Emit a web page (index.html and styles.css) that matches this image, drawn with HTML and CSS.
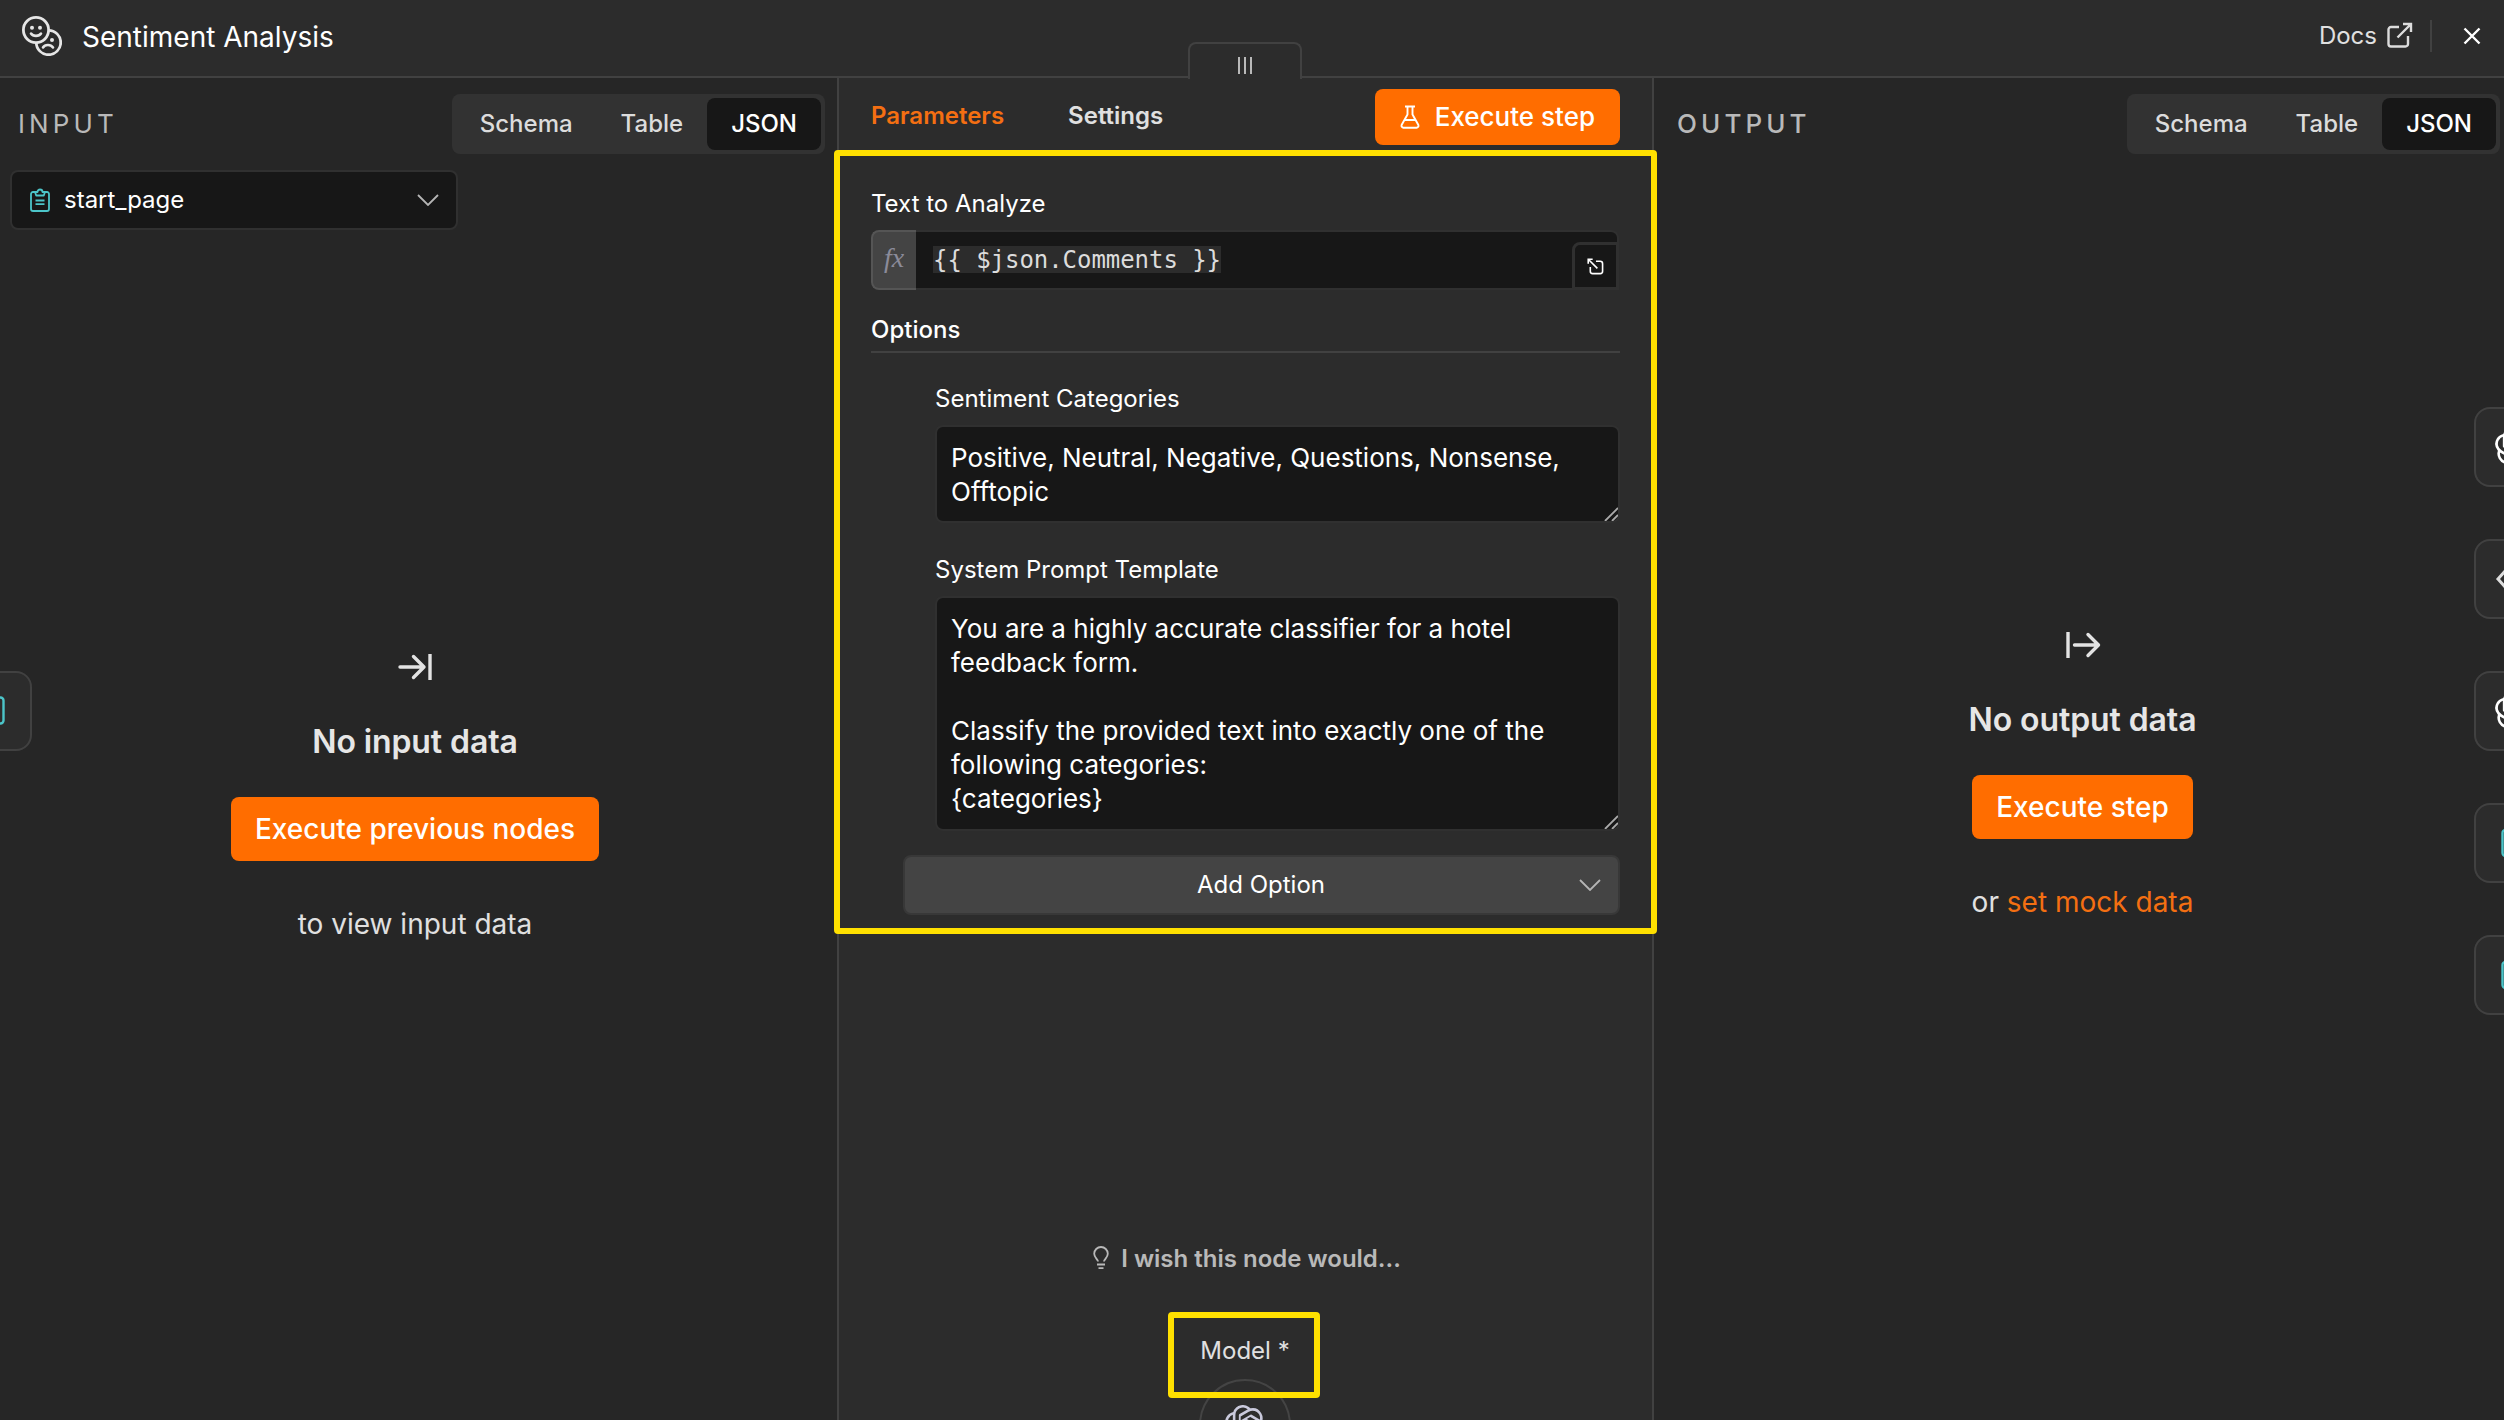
FILE: index.html
```
<!DOCTYPE html>
<html lang="en">
<head>
    <meta charset="UTF-8">
    <meta name="viewport" content="width=device-width, initial-scale=1.0">
    <title>Sentiment Analysis</title>
    <link rel="stylesheet" href="styles.css">
</head>
<body>
    <!-- Shared icons -->
    <svg class="icon-defs" width="0" height="0">
        <symbol id="openai" viewBox="0 0 24 24">
            <path fill="currentColor" d="M22.2819 9.8211a5.9847 5.9847 0 0 0-.5157-4.9108 6.0462 6.0462 0 0 0-6.5098-2.9A6.0651 6.0651 0 0 0 4.9807 4.1818a5.9847 5.9847 0 0 0-3.9977 2.9 6.0462 6.0462 0 0 0 .7427 7.0966 5.98 5.98 0 0 0 .511 4.9107 6.051 6.051 0 0 0 6.5146 2.9001A5.9847 5.9847 0 0 0 13.2599 24a6.0557 6.0557 0 0 0 5.7718-4.2058 5.9894 5.9894 0 0 0 3.9977-2.9001 6.0557 6.0557 0 0 0-.7475-7.0729zm-9.022 12.6081a4.4755 4.4755 0 0 1-2.8764-1.0408l.1419-.0804 4.7783-2.7582a.7948.7948 0 0 0 .3927-.6813v-6.7369l2.02 1.1686a.071.071 0 0 1 .038.052v5.5826a4.504 4.504 0 0 1-4.4945 4.4944zm-9.6607-4.1254a4.4708 4.4708 0 0 1-.5346-3.0137l.142.0852 4.783 2.7582a.7712.7712 0 0 0 .7806 0l5.8428-3.3685v2.3324a.0804.0804 0 0 1-.0332.0615L9.74 19.9502a4.4992 4.4992 0 0 1-6.1408-1.6464zM2.3408 7.8956a4.485 4.485 0 0 1 2.3655-1.9728V11.6a.7664.7664 0 0 0 .3879.6765l5.8144 3.3543-2.0201 1.1685a.0757.0757 0 0 1-.071 0l-4.8303-2.7865A4.504 4.504 0 0 1 2.3408 7.872zm16.5963 3.8558L13.1038 8.364 15.1192 7.2a.0757.0757 0 0 1 .071 0l4.8303 2.7913a4.4944 4.4944 0 0 1-.6765 8.1042v-5.6772a.79.79 0 0 0-.407-.667zm2.0107-3.0231l-.142-.0852-4.7735-2.7818a.7759.7759 0 0 0-.7854 0L9.409 9.2297V6.8974a.0662.0662 0 0 1 .0284-.0615l4.8303-2.7866a4.4992 4.4992 0 0 1 6.6802 4.66zM8.3065 12.863l-2.02-1.1638a.0804.0804 0 0 1-.038-.0567V6.0742a4.4992 4.4992 0 0 1 7.3757-3.4537l-.142.0805L8.704 5.459a.7948.7948 0 0 0-.3927.6813zm1.0976-2.3654l2.602-1.4998 2.6069 1.4998v2.9994l-2.5974 1.4997-2.6067-1.4997Z"/>
        </symbol>
        <symbol id="form" viewBox="0 0 20 24">
            <g fill="none" stroke="currentColor" stroke-width="1.800" stroke-linejoin="round">
                <path d="M5.500 4H3a2 2 0 0 0-2 2v15a2 2 0 0 0 2 2h14a2 2 0 0 0 2-2V6a2 2 0 0 0-2-2h-2.500"/>
                <path d="M5 4h2.500a2.500 2.500 0 0 1 5 0H15L13.800 7.500H6.200z"/>
                <path d="M5.500 12.500h9M5.500 16.200h9"/>
            </g>
        </symbol>
        <symbol id="chevron" viewBox="0 0 22 12">
            <path fill="none" stroke="currentColor" stroke-width="1.800" d="M1 1l10 10L21 1"/>
        </symbol>
    </svg>

    <header class="header">
        <svg class="node-icon" width="40" height="40" viewBox="0 0 40 40">
            <g fill="none" stroke="#e6e6e6" stroke-width="2.800" stroke-linecap="round">
                <circle cx="26.500" cy="26.500" r="12.200"/>
                <path d="M21 31.500c2-3.200 7.500-3.600 10 0" stroke-width="2.600"/>
                <circle cx="14" cy="14" r="12.600" fill="#2c2c2c"/>
                <path d="M9 17.500c2 3.200 8 3.200 10 0" stroke-width="2.600"/>
            </g>
            <g fill="#e6e6e6">
                <circle cx="10" cy="11.800" r="2"/>
                <circle cx="18" cy="11.800" r="2"/>
                <circle cx="30" cy="24" r="2"/>
            </g>
        </svg>
        <span class="header-title">Sentiment Analysis</span>
        <a class="docs">Docs
            <svg width="26" height="26" viewBox="0 0 26 26" fill="none" stroke="#dcdcdc" stroke-width="2.400">
                <path d="M12 5H4a2.500 2.500 0 0 0-2.500 2.500V22A2.500 2.500 0 0 0 4 24.500h14.500A2.500 2.500 0 0 0 21 22v-8M16 2h8v8M24 2L10.500 15.500"/>
            </svg>
        </a>
        <span class="divider"></span>
        <svg class="close" width="18" height="18" viewBox="0 0 18 18">
            <path d="M1.500 1.500l15 15M16.500 1.500l-15 15" stroke="#fff" stroke-width="2.400"/>
        </svg>
    </header>

    <main class="panels">
        <section class="side-panel input-panel">
            <div class="panel-head">
                <h2 class="panel-title">INPUT</h2>
                <div class="view-tabs">
                    <span class="view-tab">Schema</span>
                    <span class="view-tab">Table</span>
                    <span class="view-tab active">JSON</span>
                </div>
            </div>
            <div class="node-select">
                <svg class="teal" width="20" height="24"><use href="#form"/></svg>
                <span>start_page</span>
                <svg class="chevron" width="22" height="12"><use href="#chevron"/></svg>
            </div>
            <div class="empty">
                <svg width="36" height="28" viewBox="0 0 36 28" fill="none" stroke="#e3e3e3" stroke-width="3.400">
                    <path stroke-linecap="round" stroke-linejoin="round" d="M3 14h24M16.500 3.500L27 14 16.500 24.500"/>
                    <path d="M33 1v26"/>
                </svg>
                <h3 class="empty-title">No input data</h3>
                <button class="btn">Execute previous nodes</button>
                <p class="empty-text">to view input data</p>
            </div>
            <div class="nav-node nav-left"><svg class="teal" width="24" height="30" viewBox="0 0 24 30"><rect x="1.500" y="1.500" width="21" height="26" rx="3" fill="none" stroke="currentColor" stroke-width="2.400"/></svg></div>
        </section>

        <section class="params-panel">
            <div class="drag-handle"><i></i><i></i><i></i></div>
            <div class="params-tabs">
                <span class="params-tab active">Parameters</span>
                <span class="params-tab">Settings</span>
                <button class="btn btn-small">
                    <svg width="20" height="24" viewBox="0 0 20 24" fill="none" stroke="#fff" stroke-width="1.900" stroke-linejoin="round">
                        <path d="M5 1.500h10M7.500 1.500v8L1.600 20a2 2 0 0 0 1.800 2.700h13.200a2 2 0 0 0 1.800-2.700l-5.900-10.500v-8M4.500 15h11"/>
                    </svg>
                    Execute step
                </button>
            </div>

            <div class="params highlight">
                <label class="label">Text to Analyze</label>
                <div class="expression">
                    <span class="fx">fx</span>
                    <div class="expression-input"><code>{{ $json.Comments }}</code></div>
                    <span class="expand">
                        <svg width="17" height="17" viewBox="0 0 18 18" fill="none" stroke="#fff" stroke-width="1.700">
                            <path d="M9.500 3.500H14A2.500 2.500 0 0 1 16.500 6v8a2.500 2.500 0 0 1-2.500 2.500H6A2.500 2.500 0 0 1 3.500 14V9.500M1.300 6V1.300H6M1.300 1.300L11 11"/>
                        </svg>
                    </span>
                </div>
                <h4 class="options-title">Options</h4>
                <div class="options">
                    <label class="label">Sentiment Categories</label>
                    <div class="textarea textarea-short">Positive, Neutral, Negative, Questions, Nonsense, Offtopic
                        <svg class="grip" width="14" height="14" viewBox="0 0 14 14"><path d="M1 14L14 1M8 14l6-6" stroke="#aaa" stroke-width="1.800"/></svg>
                    </div>
                    <label class="label">System Prompt Template</label>
                    <div class="textarea textarea-long">You are a highly accurate classifier for a hotel feedback form.<br><br>Classify the provided text into exactly one of the following categories:<br>{categories}
                        <svg class="grip" width="14" height="14" viewBox="0 0 14 14"><path d="M1 14L14 1M8 14l6-6" stroke="#aaa" stroke-width="1.800"/></svg>
                    </div>
                </div>
                <div class="add-option">
                    <span>Add Option</span>
                    <svg class="chevron" width="22" height="12"><use href="#chevron"/></svg>
                </div>
            </div>

            <div class="wish">
                <svg width="16" height="24" viewBox="0 0 16 24" fill="none" stroke="#b9b9b9" stroke-width="1.800">
                    <path d="M5 15.500c0-2-3.800-4-3.800-7.700a6.800 6.800 0 0 1 13.600 0c0 3.700-3.800 5.700-3.800 7.700M4 18.500h8M5.500 22.200h5"/>
                </svg>
                I wish this node would...
            </div>
            <div class="model highlight">Model *</div>
            <div class="model-node"><svg width="40" height="40"><use href="#openai"/></svg></div>
        </section>

        <section class="side-panel output-panel">
            <div class="panel-head">
                <h2 class="panel-title bold">OUTPUT</h2>
                <div class="view-tabs">
                    <span class="view-tab">Schema</span>
                    <span class="view-tab">Table</span>
                    <span class="view-tab active">JSON</span>
                </div>
            </div>
            <div class="empty">
                <svg width="36" height="28" viewBox="0 0 36 28" fill="none" stroke="#e3e3e3" stroke-width="3.400">
                    <path stroke-linecap="round" stroke-linejoin="round" d="M9.500 14h24M23 3.500L33.500 14 23 24.500"/>
                    <path d="M3 1v26"/>
                </svg>
                <h3 class="empty-title">No output data</h3>
                <button class="btn">Execute step</button>
                <p class="empty-text">or <a>set mock data</a></p>
            </div>
            <div class="nav-list">
                <div class="nav-node"><svg width="40" height="40"><use href="#openai"/></svg></div>
                <div class="nav-node"><svg width="40" height="40" viewBox="0 0 40 40"><path d="M12 10L3 20l9 10M28 10l9 10-9 10" fill="none" stroke="#ddd" stroke-width="3"/></svg></div>
                <div class="nav-node"><svg width="40" height="40"><use href="#openai"/></svg></div>
                <div class="nav-node"><svg class="teal" width="28" height="40" viewBox="0 0 28 40"><rect x="1.500" y="7" width="25" height="26" rx="3" fill="none" stroke="currentColor" stroke-width="2.400"/></svg></div>
                <div class="nav-node"><svg class="teal" width="28" height="40" viewBox="0 0 28 40"><rect x="1.500" y="7" width="25" height="26" rx="3" fill="none" stroke="currentColor" stroke-width="2.400"/></svg></div>
            </div>
        </section>
    </main>
</body>
</html>
```

FILE: styles.css
```
* {
    box-sizing: border-box;
}

body {
    margin: 0;
    height: 1420px;
    display: flex;
    flex-direction: column;
    overflow: hidden;
    background-color: #262626;
    color: #fff;
    font-family: Inter, "Liberation Sans", sans-serif;
    font-size: 24px;
}

h2, h3, h4, p {
    margin: 0;
}

svg {
    display: block;
    flex-shrink: 0;
}

.icon-defs {
    position: absolute;
}

.teal {
    color: #4cc5c9;
}

.chevron {
    color: #b5b5b5;
    margin-left: auto;
}

/* Header */
.header {
    display: flex;
    align-items: center;
    height: 78px;
    flex-shrink: 0;
    padding: 0 23px 4px 22px;
    background-color: #2c2c2c;
    border-bottom: 2px solid #414141;
}

.header-title {
    margin-left: 20px;
    padding-top: 1px;
    font-size: 28px;
}

.docs {
    display: flex;
    align-items: center;
    gap: 10px;
    margin-left: auto;
    padding-bottom: 2px;
    color: #e0e0e0;
}

.divider {
    width: 2px;
    height: 32px;
    margin: 0 31px 0 17px;
    background-color: #414141;
}

/* Panels */
.panels {
    display: flex;
    flex: 1;
    min-height: 0;
}

.side-panel {
    position: relative;
    display: flex;
    flex-direction: column;
}

.input-panel {
    width: 837px;
}

.output-panel {
    flex: 1;
}

.panel-head {
    display: flex;
    justify-content: space-between;
    align-items: center;
    padding: 16px 12px 0 18px;
}

.output-panel .panel-head {
    padding: 16px 4px 0 23px;
}

.panel-title {
    padding-bottom: 2px;
    font-size: 26px;
    font-weight: 400;
    letter-spacing: 4.100px;
    color: #b9b9b9;
}

.panel-title.bold {
    font-weight: 500;
}

.view-tabs {
    display: flex;
    height: 60px;
    padding: 4px;
    background-color: #323232;
    border-radius: 8px;
}

.view-tab {
    display: flex;
    align-items: center;
    padding: 0 24px 2px;
    font-weight: 500;
    color: #dcdcdc;
    border-radius: 8px;
}

.view-tab.active {
    color: #fff;
    background-color: #171717;
}

.node-select {
    display: flex;
    align-items: center;
    width: 448px;
    height: 60px;
    margin: 16px 0 0 10px;
    padding: 0 17px 1px 18px;
    background-color: #171717;
    border: 2px solid #303030;
    border-radius: 8px;
}

.node-select span {
    margin-left: 14px;
    padding-bottom: 1px;
}

/* Empty states */
.empty {
    display: flex;
    flex-direction: column;
    align-items: center;
    margin-top: 423px;
    padding-right: 7px;
}

.output-panel .empty {
    margin-top: 477px;
    padding-right: 0;
    padding-left: 19px;
    margin-right: 12px;
}

.empty-title {
    margin-top: 41px;
    font-size: 32px;
    line-height: 40px;
    font-weight: 600;
    letter-spacing: -0.100px;
    color: #e6e6e6;
}

.btn {
    display: flex;
    align-items: center;
    justify-content: center;
    height: 64px;
    margin-top: 35px;
    padding: 0 24px;
    font-family: inherit;
    font-size: 28px;
    font-weight: 500;
    color: #fff;
    background-color: #ff6d00;
    border: none;
    border-radius: 8px;
    cursor: pointer;
}

.empty-text {
    margin-top: 45px;
    font-size: 28px;
    line-height: 36px;
    color: #e0e0e0;
}

.empty-text a {
    color: #f46f12;
}

/* Neighbour node shortcuts */
.nav-node {
    display: flex;
    align-items: center;
    width: 80px;
    height: 80px;
    padding-left: 19px;
    background-color: #2c2c2c;
    border: 2px solid #414141;
    border-radius: 16px;
}

.nav-list {
    position: absolute;
    top: 329px;
    left: 820px;
    display: flex;
    flex-direction: column;
    gap: 52px;
}

.nav-list .teal {
    margin-left: 6px;
}

.nav-left {
    position: absolute;
    top: 593px;
    left: -48px;
    padding-left: 27px;
}

/* Parameters */
.params-panel {
    position: relative;
    display: flex;
    flex-direction: column;
    width: 817px;
    background-color: #2c2c2c;
    border: solid #414141;
    border-width: 0 2px;
}

.drag-handle {
    position: absolute;
    top: -36px;
    left: 349px;
    display: flex;
    justify-content: center;
    gap: 4px;
    width: 114px;
    height: 37px;
    padding-top: 13px;
    background-color: #2c2c2c;
    border: 2px solid #414141;
    border-bottom: none;
    border-radius: 8px 8px 0 0;
}

.drag-handle i {
    width: 2px;
    height: 17px;
    background-color: #b9b9b9;
}

.params-tabs {
    display: flex;
    align-items: center;
    height: 72px;
    padding: 5px 32px 0 32px;
}

.params-tab {
    padding-bottom: 3px;
    margin-right: 64px;
    font-weight: 600;
    color: #e0e0e0;
}

.params-tab.active {
    color: #f46f12;
}

.btn-small {
    height: 56px;
    margin: 0 0 0 auto;
    padding: 0 25px;
    gap: 15px;
    font-size: 26px;
}

.highlight {
    border: 6px solid #ffe000;
    border-radius: 4px;
}

.params {
    height: 784px;
    margin: 0 -5px;
    padding: 32px 31px 0;
}

.label {
    display: block;
    line-height: 32px;
}

.expression {
    position: relative;
    display: flex;
    width: 748px;
    height: 60px;
    margin-top: 10px;
}

.fx {
    width: 45px;
    padding: 11px 0 0 11px;
    font-family: "Liberation Serif", serif;
    font-style: italic;
    font-size: 28px;
    line-height: 30px;
    color: #8b8b99;
    background-color: #444;
    border: 2px solid #555;
    border-right: none;
    border-radius: 8px 0 0 8px;
}

.expression-input {
    flex: 1;
    padding: 14px 17px;
    background-color: #171717;
    border: 2px solid #303030;
    border-left: none;
    border-radius: 0 8px 0 0;
}

.expression-input code {
    display: block;
    width: 288px;
    height: 27px;
    font-family: "DejaVu Sans Mono", monospace;
    font-size: 24px;
    letter-spacing: -0.050px;
    line-height: 29px;
    white-space: nowrap;
    color: #dcdcdc;
    background-color: #2c2c2c;
}

.expand {
    position: absolute;
    right: 0;
    bottom: 0;
    display: flex;
    align-items: center;
    justify-content: center;
    width: 47px;
    height: 48px;
    background-color: #171717;
    border: 3px solid #303030;
    border-radius: 8px 0 0 0;
}

.options-title {
    margin-top: 24px;
    padding-bottom: 5px;
    font-size: 24px;
    line-height: 32px;
    font-weight: 550;
    border-bottom: 2px solid #414141;
}

.options {
    padding: 30px 0 0 64px;
}

.textarea {
    position: relative;
    width: 685px;
    padding: 14px 14px 0;
    font-size: 26px;
    line-height: 33.900px;
    background-color: #171717;
    border: 2px solid #303030;
    border-radius: 8px;
}

.textarea-short {
    height: 98px;
    margin: 10px 0 31px;
}

.textarea-long {
    height: 235px;
    margin: 10px 0 24px;
}

.grip {
    position: absolute;
    right: 0;
    bottom: 0;
}

.add-option {
    display: flex;
    align-items: center;
    height: 60px;
    margin-left: 32px;
    padding: 0 17px 1px 292px;
    background-color: #444;
    border: 2px solid #383838;
    border-radius: 8px;
}

.wish {
    display: flex;
    justify-content: center;
    gap: 12px;
    margin-top: 310px;
    padding-left: 3px;
    font-weight: 600;
    color: #b9b9b9;
}

.wish svg {
    margin-top: 2px;
}

.model {
    position: relative;
    z-index: 1;
    width: 152px;
    height: 86px;
    margin: 39px auto 0 329px;
    padding: 18px 0 0 2px;
    text-align: center;
    color: #e0e0e0;
}

.model-node {
    position: absolute;
    top: 1301px;
    left: 360px;
    display: flex;
    justify-content: center;
    width: 92px;
    height: 92px;
    padding-top: 24px;
    color: #c9c9dc;
    border: 2px solid #444;
    border-radius: 50%;
}
```
